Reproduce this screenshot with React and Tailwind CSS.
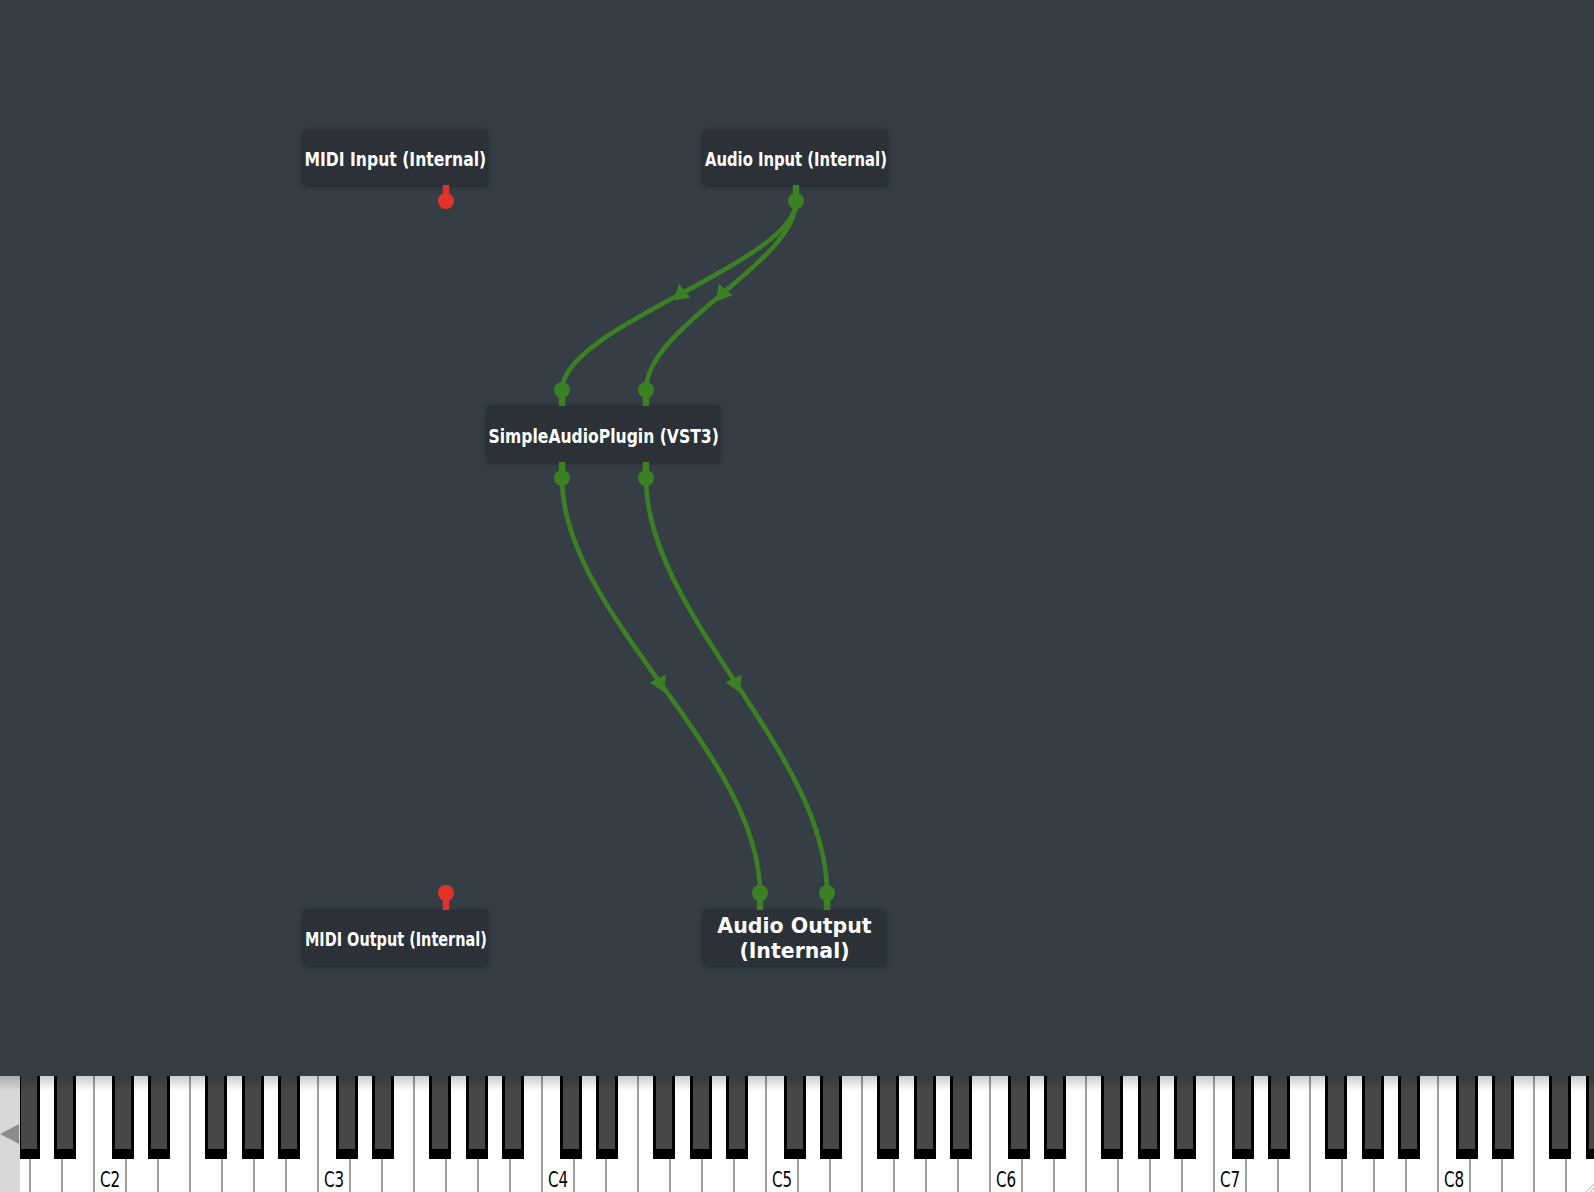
import React, { useLayoutEffect, useRef, useState } from "react";

const GREEN = "#3c8024";
const RED = "#e2332a";

const nodes = [
  { id: "midiIn", x: 303, y: 130, w: 185, h: 55, label: "MIDI Input (Internal)" },
  { id: "audioIn", x: 703, y: 130, w: 185, h: 55, label: "Audio Input (Internal)" },
  { id: "plugin", x: 487, y: 406, w: 233, h: 56, label: "SimpleAudioPlugin (VST3)" },
  { id: "midiOut", x: 303, y: 910, w: 185, h: 55, label: "MIDI Output (Internal)" },
  { id: "audioOut", x: 703, y: 910, w: 183, h: 55, label: "Audio Output (Internal)", wrap: true },
];

// pin centre, the node edge the stem runs to, and the colour
const pins = [
  { x: 446, y: 201, edge: 185, color: RED },
  { x: 796, y: 201, edge: 185, color: GREEN },
  { x: 562, y: 390, edge: 406, color: GREEN },
  { x: 646, y: 390, edge: 406, color: GREEN },
  { x: 562, y: 478, edge: 462, color: GREEN },
  { x: 646, y: 478, edge: 462, color: GREEN },
  { x: 446, y: 893, edge: 910, color: RED },
  { x: 760, y: 893, edge: 910, color: GREEN },
  { x: 827, y: 893, edge: 910, color: GREEN },
];

const wires = [
  [796, 201, 562, 390],
  [796, 201, 646, 390],
  [562, 478, 760, 893],
  [646, 478, 827, 893],
];

const Wire = ({ x1, y1, x2, y2 }) => {
  const dy = y2 - y1;
  const d = `M ${x1} ${y1} C ${x1} ${y1 + dy * 0.33} ${x2} ${y1 + dy * 0.66} ${x2} ${y2}`;
  const angle = (Math.atan2(y2 - y1, x2 - x1) * 180) / Math.PI;
  const mx = (x1 + x2) / 2;
  const my = (y1 + y2) / 2;
  return (
    <g>
      <path d={d} fill="none" stroke={GREEN} strokeWidth="4.6" />
      <polygon
        points="-7.5,9 -7.5,-9 7.5,0"
        fill={GREEN}
        transform={`translate(${mx} ${my}) rotate(${angle})`}
      />
    </g>
  );
};

const Pin = ({ x, y, edge, color }) => {
  const top = Math.min(y, edge);
  return (
    <g fill={color}>
      <rect x={x - 3.2} y={top} width="6.4" height={Math.abs(edge - y)} />
      <circle cx={x} cy={y} r="8" />
    </g>
  );
};

// squeezes a single line sideways when it is wider than its box
const FitText = ({ children }) => {
  const box = useRef(null);
  const text = useRef(null);
  const [sx, setSx] = useState(1);

  useLayoutEffect(() => {
    const measure = () => {
      if (!box.current || !text.current) return;
      const avail = box.current.clientWidth - 3;
      const w = text.current.offsetWidth;
      setSx(w > avail ? avail / w : 1);
    };
    measure();
    if (document.fonts && document.fonts.ready) document.fonts.ready.then(measure);
  }, []);

  return (
    <div ref={box} className="flex w-full justify-center pt-[3px]">
      <span
        ref={text}
        className="inline-block shrink-0 whitespace-nowrap"
        style={{ transform: `scaleX(${sx})` }}
      >
        {children}
      </span>
    </div>
  );
};

const Node = ({ node }) => (
  <div
    className="absolute flex items-center justify-center bg-[#2b3137] text-[20px] font-bold text-white shadow-[0_1px_6px_rgba(0,0,0,0.4)] font-['DejaVu_Sans',sans-serif]"
    style={{ left: node.x, top: node.y, width: node.w, height: node.h }}
  >
    {node.wrap ? (
      <div className="px-2 pt-[3px] text-center text-[20.5px] leading-[25px]">{node.label}</div>
    ) : (
      <FitText>{node.label}</FitText>
    )}
  </div>
);

const BLACK_OFFSETS = [18.6, 55, 112.3, 148.8, 185.3];
const OCTAVES = [1, 2, 3, 4, 5, 6, 7, 8, 9];

const Octave = ({ n }) => (
  <div className="relative flex shrink-0">
    {[0, 1, 2, 3, 4, 5, 6].map(i => (
      <div key={i} className="relative h-[116px] w-[32px] shrink-0 border-l-2 border-[#a0a0a0] bg-white">
        {i === 0 && n >= 2 && n <= 8 && (
          <div className="absolute inset-x-0 bottom-[1px] text-center text-[21px] leading-none text-black font-['DejaVu_Sans',sans-serif]">
            <span className="inline-block scale-x-[0.72]">C{n}</span>
          </div>
        )}
      </div>
    ))}
    {BLACK_OFFSETS.map(off => (
      <div key={off} className="absolute top-0 h-[83px] w-[22px] bg-black" style={{ left: off }}>
        <div className="mx-[3px] h-[73px] bg-[#474747]" />
      </div>
    ))}
  </div>
);

const Keyboard = () => (
  <div className="relative flex h-[116px] shrink-0 bg-white">
    <div className="flex w-[20px] shrink-0 items-center bg-[#d8d8d8]">
      <svg width="19" height="20" viewBox="0 0 19 20">
        <polygon points="0,10 19,0 19,20" fill="#8c8c8c" />
      </svg>
    </div>
    <div className="relative flex-1 overflow-hidden">
      <div className="-ml-[151px] flex">
        {OCTAVES.map(n => (
          <Octave key={n} n={n} />
        ))}
      </div>
    </div>
    <div className="pointer-events-none absolute inset-x-0 top-0 h-[15px] bg-linear-to-b from-[rgba(0,0,0,0.2)] to-transparent" />
    <svg className="absolute bottom-0 right-0" width="10" height="10" viewBox="0 0 10 10">
      <line x1="2" y1="10" x2="10" y2="2" stroke="#b0b0b0" strokeWidth="1" />
      <line x1="6" y1="10" x2="10" y2="6" stroke="#b0b0b0" strokeWidth="1" />
    </svg>
  </div>
);

export default function App() {
  return (
    <div className="flex h-[1192px] w-[1594px] flex-col overflow-hidden bg-[#363e45]">
      <div className="relative flex-1">
        {nodes.map(node => (
          <Node key={node.id} node={node} />
        ))}
        <svg className="absolute inset-0 h-full w-full" width="1594" height="1076">
          {wires.map(([x1, y1, x2, y2], i) => (
            <Wire key={i} x1={x1} y1={y1} x2={x2} y2={y2} />
          ))}
          {pins.map((p, i) => (
            <Pin key={i} {...p} />
          ))}
        </svg>
      </div>
      <Keyboard />
    </div>
  );
}
